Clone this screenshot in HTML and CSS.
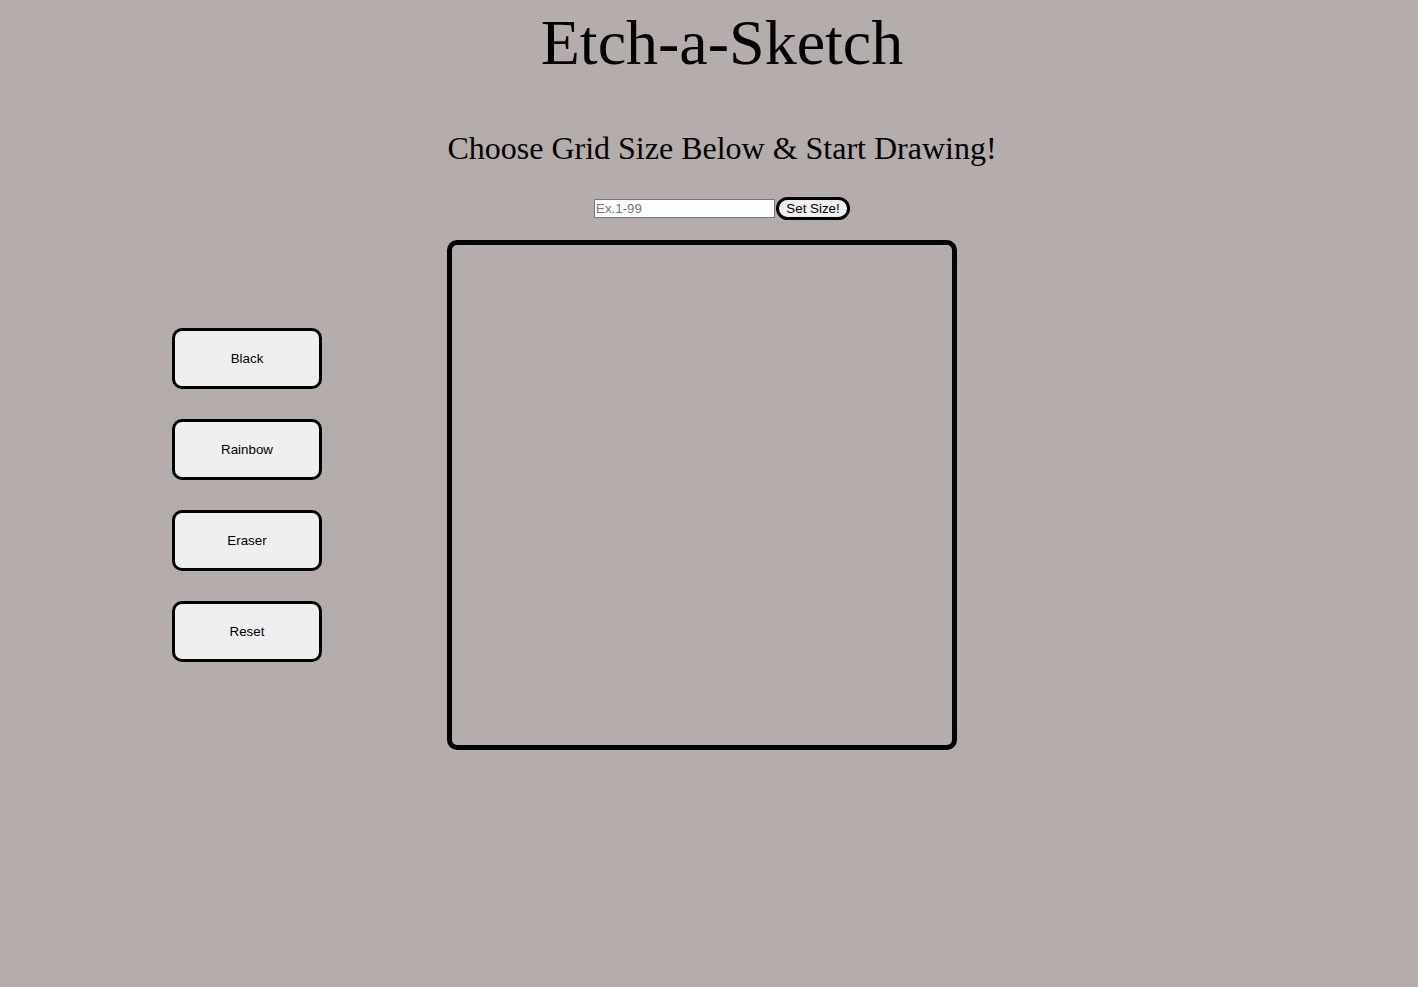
FILE: index.html
```html
<!DOCTYPE html>
<html>
<head>
<meta charset="utf-8">
<title>Etch-a-Sketch</title>
<link rel="stylesheet" href="styles.css">
</head>
<body>
<header class="header">
  <h1 class="title">Etch-a-Sketch</h1>
  <h2 class="subtitle">Choose Grid Size Below &amp; Start Drawing!</h2>
  <div class="size-row">
    <input class="size-input" type="text" placeholder="Ex.1-99">
    <button class="size-btn">Set Size!</button>
  </div>
</header>
<main class="main">
  <div class="tools">
    <button class="tool">Black</button>
    <button class="tool">Rainbow</button>
    <button class="tool">Eraser</button>
    <button class="tool">Reset</button>
  </div>
  <div class="board"></div>
</main>
</body>
</html>
```
FILE: styles.css
```css
body {
  margin: 0;
  background: #b5adac;
  font-family: "Liberation Serif", serif;
  color: #000;
}
.header {
  display: flex;
  flex-direction: column;
  align-items: center;
  padding-left: 26px;
}
.title {
  font-size: 64px;
  font-weight: normal;
  line-height: 73px;
  margin: 6px 0 0;
}
.subtitle {
  font-size: 32px;
  font-weight: normal;
  line-height: 37px;
  margin: 51px 0 0;
}
.size-row {
  display: flex;
  align-items: center;
  margin-top: 30px;
  height: 23px;
}
.size-input {
  box-sizing: border-box;
  width: 181px;
  height: 19px;
  border: 1px solid #767676;
  padding: 1px 1px;
  margin: 0;
  font-family: "Liberation Sans", Arial, sans-serif;
  font-size: 13.33px;
  background: #fff;
}
.size-input::placeholder {
  color: #757575;
}
.size-btn {
  box-sizing: border-box;
  margin: 0 0 0 1px;
  height: 23px;
  width: 74px;
  padding: 0;
  border: 3px solid #000;
  border-radius: 12px;
  background: #efefef;
  font-family: "Liberation Sans", Arial, sans-serif;
  font-size: 13.33px;
  color: #000;
}
.main {
  display: flex;
  align-items: flex-start;
  gap: 125px;
  padding-left: 172px;
  margin-top: 20px;
}
.tools {
  display: flex;
  flex-direction: column;
  gap: 30px;
  margin-top: 88px;
}
.tool {
  box-sizing: border-box;
  width: 150px;
  height: 61px;
  margin: 0;
  border: 3px solid #000;
  border-radius: 10px;
  background: #efefef;
  font-family: "Liberation Sans", Arial, sans-serif;
  font-size: 13.33px;
  color: #000;
}
.board {
  box-sizing: border-box;
  width: 510px;
  height: 510px;
  border: 5px solid #000;
  border-radius: 10px;
}
```
